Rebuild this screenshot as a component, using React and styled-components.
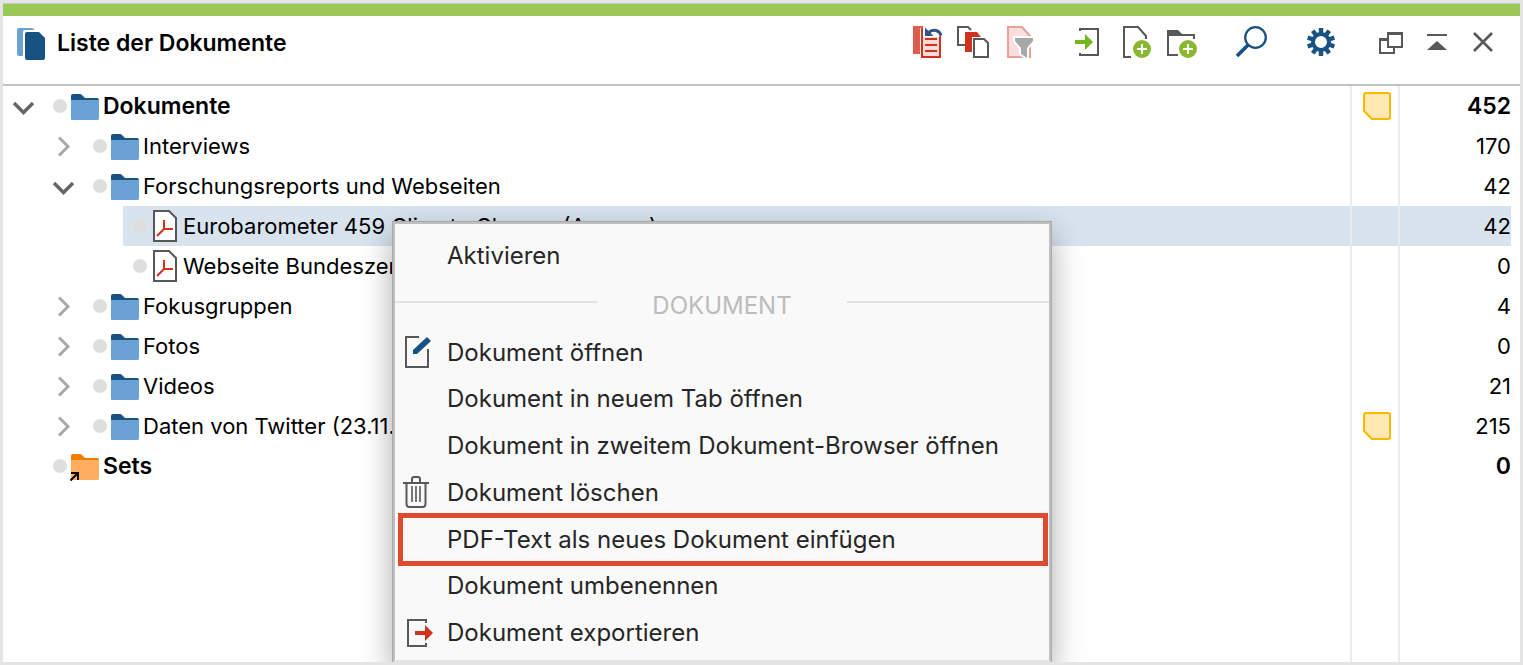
import React, { useState } from 'react';
import styled, { createGlobalStyle } from 'styled-components';

const GlobalStyle = createGlobalStyle`
* {
    box-sizing: border-box;
}
body {
    margin: 0;
    background-color: #e4e4e4;
    font-family: Inter, "Noto Sans", sans-serif;
    color: black;
}
`

const Page = styled.div`
height: 100vh;
padding: 3px;
`

const Panel = styled.section`
position: relative;
display: flex;
flex-direction: column;
height: 100%;
overflow: hidden;
background-color: white;
border-top: 1px solid #c8c8c8;
`

const Accent = styled.div`
flex: none;
height: 12px;
background-color: #9bc955;
`

const Header = styled.header`
display: flex;
flex: none;
justify-content: space-between;
align-items: flex-start;
padding: 10px 21px 26px 14px;
border-bottom: 2px solid #c1c1c1;
`

const TitleBar = styled.div`
display: flex;
gap: 12px;
height: 32px;
`

const Title = styled.h1`
margin: 0;
font-size: 23px;
font-weight: 600;
line-height: 35px;
`

const Toolbar = styled.div`
display: flex;
gap: 38px;
`

const ToolGroup = styled.div`
display: flex;
gap: 14px;
`

const ToolButton = styled.button`
width: 32px;
height: 32px;
padding: 0;
border: none;
background: none;
cursor: pointer;
`

const Icon = styled.svg`
display: block;
flex: none;
overflow: visible;
fill: none;
`

const TableArea = styled.div`
flex: 1;
min-height: 0;
`

const Table = styled.table`
width: 100%;
height: 100%;
table-layout: fixed;
border-collapse: separate;
border-spacing: 0;
font-size: 22px;
`

const Row = styled.tr`
height: 40px;
font-size: ${props => props.$bold ? 23 : 22}px;
font-weight: ${props => props.$bold ? 600 : 400};
`

const NameCell = styled.td`
padding: 0 0 0 ${props => props.$level * 40}px;
`

const NameLine = styled.div`
display: flex;
height: 40px;
`

const Toggle = styled.button`
width: 40px;
height: 40px;
padding: 0;
border: none;
background: none;
cursor: pointer;
`

const Blank = styled.span`
width: 40px;
`

const Entry = styled.div`
display: flex;
flex: 1;
align-items: center;
padding-left: 10px;
line-height: 40px;
white-space: nowrap;
background-color: ${props => props.$selected ? '#d8e3ee' : 'transparent'};
`

const Dot = styled.span`
width: 14px;
height: 14px;
border-radius: 50%;
background-color: #dedede;
`

const MemoCell = styled.td`
width: 48px;
padding: 0 0 0 11px;
border-left: 2px solid #ebebeb;
background-color: ${props => props.$selected ? '#d8e3ee' : 'transparent'};
background-clip: padding-box;
`

const CountCell = styled.td`
width: 122px;
padding: 0 9px 0 0;
border-left: 2px solid #ebebeb;
`

const Count = styled.div`
height: 40px;
line-height: 40px;
text-align: right;
background-color: ${props => props.$selected ? '#d8e3ee' : 'transparent'};
`

const Menu = styled.div`
position: absolute;
top: 218px;
bottom: 0;
left: 390px;
display: flex;
flex-direction: column;
width: 658px;
padding: 8px 0 4px;
background-color: #f9f9f9;
border: 2px solid #bfbfbf;
border-bottom-color: #e4e4e4;
box-shadow: 0 0 0 1px #a9a9a9, 0 12px 30px rgba(0, 0, 0, 0.35);
`

const MenuItem = styled.button`
position: relative;
display: flex;
flex: 1 1 0;
align-items: center;
gap: 13px;
max-height: 47px;
padding: 0 0 0 7px;
border: none;
background: none;
color: #262626;
font-family: inherit;
font-size: 24px;
text-align: left;
white-space: nowrap;
cursor: pointer;

&::after {
    content: '';
    display: ${props => props.$marked ? 'block' : 'none'};
    position: absolute;
    inset: -3px 1px -3px 3px;
    border: 5px solid #dd4a30;
}
`

const MenuSection = styled.div`
display: flex;
flex: none;
align-items: center;
height: 50px;
padding-bottom: 4px;
`

const Line = styled.span`
flex: 1;
height: 2px;
background-color: #e2e2e2;
`

const SectionTitle = styled.span`
width: 250px;
padding-top: 8px;
text-align: center;
font-size: 24px;
color: #bcbcbc;
`

const grey = '#585858'
const blue = '#185283'
const red = '#d0321e'

const toolGroups = [
    [
        { name: 'reset', label: 'Aktivierungen zurücksetzen' },
        { name: 'activated', label: 'Nur aktivierte Dokumente' },
        { name: 'filter', label: 'Filter' },
    ],
    [
        { name: 'import', label: 'Importieren' },
        { name: 'newDocument', label: 'Neues Dokument' },
        { name: 'newFolder', label: 'Neue Gruppe' },
    ],
    [{ name: 'search', label: 'Suchen' }],
    [{ name: 'settings', label: 'Einstellungen' }],
    [
        { name: 'undock', label: 'Abdocken' },
        { name: 'collapse', label: 'Minimieren' },
        { name: 'close', label: 'Schließen' },
    ],
]

const documents = [
    { name: 'Dokumente', level: 0, open: true, icon: 'folder', memo: true, count: 452, bold: true },
    { name: 'Interviews', level: 1, open: false, icon: 'folder', count: 170 },
    { name: 'Forschungsreports und Webseiten', level: 1, open: true, icon: 'folder', count: 42 },
    { name: 'Eurobarometer 459 Climate Change (Auszug)', level: 2, icon: 'pdf', count: 42 },
    { name: 'Webseite Bundeszentrale', level: 2, icon: 'pdf', count: 0 },
    { name: 'Fokusgruppen', level: 1, open: false, icon: 'folder', count: 4 },
    { name: 'Fotos', level: 1, open: false, icon: 'folder', count: 0 },
    { name: 'Videos', level: 1, open: false, icon: 'folder', count: 21 },
    { name: 'Daten von Twitter (23.11.2016)', level: 1, open: false, icon: 'folder', memo: true, count: 215 },
    { name: 'Sets', level: 0, icon: 'sets', count: 0, bold: true },
]

const menuItems = [
    { label: 'Dokument öffnen', icon: 'edit' },
    { label: 'Dokument in neuem Tab öffnen' },
    { label: 'Dokument in zweitem Dokument-Browser öffnen' },
    { label: 'Dokument löschen', icon: 'trash' },
    { label: 'PDF-Text als neues Dokument einfügen', marked: true },
    { label: 'Dokument umbenennen' },
    { label: 'Dokument exportieren', icon: 'export' },
]

const teeth = [0, 36, 72, 108, 144, 180, 216, 252, 288, 324]

const plusBadge = (
    <>
        <circle cx="23" cy="23" r="9" fill="#8ab833" />
        <path d="M23 18v10M18 23h10" stroke="white" strokeWidth="2" />
    </>
)

const drawings = {
    reset: (
        <>
            <path d="M2 0h11l3 2H9v26H2z" fill="#df5b4b" />
            <path d="M11 3h14l4 4v24H11z" fill="#fbdcdb" stroke={red} strokeWidth="2" />
            <path d="M14 13h12M14 19h12M14 25h12" stroke={red} strokeWidth="2" />
            <path d="M12 0h20v9l-4 2H12z" fill="white" />
            <path d="M11 2v10" stroke={red} strokeWidth="2" />
            <path d="M28 11h2V8z" fill={red} />
            <path d="M17 7q4-3.500 8-2.500 4 1 5 5" stroke="#2f5487" strokeWidth="3" />
            <path d="M14 1.500v8.500h8.500z" fill="#2f5487" />
        </>
    ),
    activated: (
        <>
            <path d="M14 4l-3-3H1v18h7" stroke={grey} strokeWidth="2" />
            <path d="M8 6h12l4 5h-9v15H8z" fill={red} />
            <path d="M17 13h10l4 4v14H17z" fill="white" stroke={grey} strokeWidth="2" />
        </>
    ),
    filter: (
        <>
            <path d="M5 1h14l8 9v21H5z" fill="#fbdddd" stroke="#e9a097" strokeWidth="2" />
            <path d="M10 10h22v4l-6 9v10h-4l-6-4v-6l-6-8z" fill="white" />
            <path d="M12 12h18v3l-6 7v10l-6-4v-6l-6-7z" fill="#a8a8a8" />
        </>
    ),
    import: (
        <>
            <path d="M7 5V3h18v26H7v-2" stroke={grey} strokeWidth="2" />
            <path d="M2 14h10V8l8 8-8 8v-6H2z" fill="#74b71b" />
        </>
    ),
    newDocument: (
        <>
            <path d="M12 31H5V1h14l8 9v3" stroke={grey} strokeWidth="2" />
            {plusBadge}
        </>
    ),
    newFolder: (
        <>
            <path d="M2 10V4h11l5 5z" fill={grey} />
            <path d="M13 29H3V9h26v4" stroke={grey} strokeWidth="2" />
            {plusBadge}
        </>
    ),
    search: (
        <>
            <circle cx="20.5" cy="11.5" r="10.3" stroke={blue} strokeWidth="2.3" />
            <path d="M13 19L2 30" stroke={blue} strokeWidth="3.8" />
        </>
    ),
    settings: (
        <>
            {teeth.map(angle => (
                <path key={angle} d="M13.800 8V2h4.400v6z" fill={blue} transform={`rotate(${angle} 16 16)`} />
            ))}
            <circle cx="16" cy="16" r="8" stroke={blue} strokeWidth="4" />
        </>
    ),
    undock: (
        <>
            <path d="M5 13h14v14H5z" stroke={grey} strokeWidth="2" />
            <path d="M4 12h8v3H4z" fill={grey} />
            <path d="M13 7h14v14H13z" fill="white" stroke={grey} strokeWidth="2" />
            <path d="M12 6h16v3H12z" fill={grey} />
        </>
    ),
    collapse: <path d="M6 8h20v2H6zM16 15l10 9H6z" fill={grey} />,
    close: <path d="M7 7l18 18M25 7L7 25" stroke={grey} strokeWidth="2.6" />,
    edit: (
        <>
            <path d="M17 1H4v30h22V13" stroke={grey} strokeWidth="2" />
            <path d="M11 18v-4L25 1l4 4-14 13z" fill={blue} />
        </>
    ),
    trash: (
        <>
            <path d="M1 7h26M10 7V3q0-2 2-2h4q2 0 2 2v4M4.500 7v21q0 3 3 3h13q3 0 3-3V7" stroke={grey} strokeWidth="2" />
            <path d="M10 10v16M14 10v16M18 10v16" stroke={grey} strokeWidth="1.6" />
        </>
    ),
    export: (
        <>
            <path d="M24 6V3H6v26h18v-3" stroke={grey} strokeWidth="2" />
            <path d="M13 14h10V8l8 8-8 8v-6H13z" fill={red} />
        </>
    ),
}

const rowDrawings = {
    folder: (
        <>
            <path d="M4 15v-5q0-2 2-2h7q1 0 2 1l3 3h12q2 0 2 2v1z" fill="#185283" />
            <path d="M4 14h28v18q0 2-1 2H5q-1 0-1-1z" fill="#6ba2d6" />
        </>
    ),
    sets: (
        <>
            <path d="M4 15v-5q0-2 2-2h7q1 0 2 1l3 3h12q2 0 2 2v1z" fill="#ef7d00" />
            <path d="M4 14h28v18q0 2-1 2H5q-1 0-1-1z" fill="#ffae61" />
            <path d="M3.500 34.500l7-7M4 27h7v7" stroke="black" strokeWidth="2" />
        </>
    ),
    pdf: (
        <>
            <path d="M7 5h15l7 7v23H7z" fill="white" stroke={grey} strokeWidth="2" />
            <path d="M17 14v9M17 23h9M17 23l-7 7" stroke={red} strokeWidth="2" />
        </>
    ),
}

const Drawing = ({ name }) => (
    <Icon width="32" height="32" viewBox="0 0 32 32" aria-hidden="true">{drawings[name]}</Icon>
)

const DocumentRow = ({ item, selected, onSelect }) => (
    <Row $bold={item.bold} onClick={onSelect}>
        <NameCell $level={item.level}>
            <NameLine>
                {item.open === undefined ? <Blank /> : (
                    <Toggle aria-label={item.name} aria-expanded={item.open}>
                        <Icon width="40" height="40" viewBox="0 0 40 40">
                            {item.open
                                ? <path d="M11 17l9.500 9.500L30 17" stroke="#666" strokeWidth="3.4" />
                                : <path d="M16 11.500l9 9-9 9" stroke="#aaa" strokeWidth="3" />}
                        </Icon>
                    </Toggle>
                )}
                <Entry $selected={selected}>
                    <Dot />
                    <Icon width="36" height="40" viewBox="0 0 36 40">{rowDrawings[item.icon]}</Icon>
                    {item.name}
                </Entry>
            </NameLine>
        </NameCell>
        <MemoCell $selected={selected}>
            {item.memo && (
                <Icon width="28" height="28" viewBox="0 0 28 28">
                    <path d="M3 1h22q2 0 2 2v22q0 2-2 2H9l-8-8V3q0-2 2-2z" fill="#ffe9b0" stroke="#f8b800" strokeWidth="2" />
                </Icon>
            )}
        </MemoCell>
        <CountCell><Count $selected={selected}>{item.count}</Count></CountCell>
    </Row>
)

const App = () => {

    const [selected, setSelected] = useState(3)

    return (
        <Page>
            <GlobalStyle />
            <Panel>
                <Accent />
                <Header>
                    <TitleBar>
                        <Icon width="28" height="34" viewBox="0 0 28 34">
                            <path d="M2 2h13l3 2H8q-2 0-2 2v24H2q-2 0-2-2V4q0-2 2-2z" fill="#6ba2d6" />
                            <path d="M10 6h12l6 6v20q0 2-2 2H10q-2 0-2-2V8q0-2 2-2z" fill={blue} />
                        </Icon>
                        <Title>Liste der Dokumente</Title>
                    </TitleBar>
                    <Toolbar>
                        {toolGroups.map((group, index) => (
                            <ToolGroup key={index}>
                                {group.map(tool => (
                                    <ToolButton key={tool.name} aria-label={tool.label}>
                                        <Drawing name={tool.name} />
                                    </ToolButton>
                                ))}
                            </ToolGroup>
                        ))}
                    </Toolbar>
                </Header>

                <TableArea>
                    <Table>
                        <tbody>
                            {documents.map((item, index) => (
                                <DocumentRow
                                key={item.name}
                                item={item}
                                selected={index === selected}
                                onSelect={() => setSelected(index)}
                                />
                            ))}
                            <tr>
                                <td />
                                <MemoCell />
                                <CountCell />
                            </tr>
                        </tbody>
                    </Table>
                </TableArea>

                <Menu role="menu">
                    <MenuItem role="menuitem">
                        <Icon width="32" height="32" />
                        Aktivieren
                    </MenuItem>
                    <MenuSection>
                        <Line />
                        <SectionTitle>DOKUMENT</SectionTitle>
                        <Line />
                    </MenuSection>
                    {menuItems.map(item => (
                        <MenuItem key={item.label} role="menuitem" $marked={item.marked}>
                            <Drawing name={item.icon} />
                            {item.label}
                        </MenuItem>
                    ))}
                </Menu>
            </Panel>
        </Page>
    )
}

export default App;
